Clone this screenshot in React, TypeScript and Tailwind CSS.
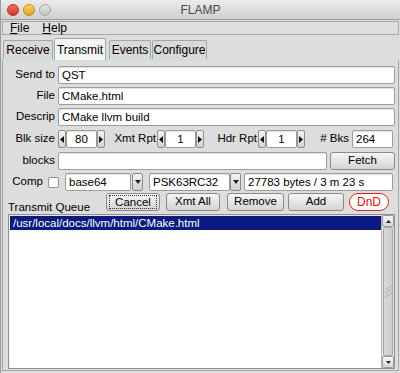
import React from 'react';

const font = { fontFamily: '"Liberation Sans", Arial, sans-serif' };

function Field({ value, className = '' }: { value?: string; className?: string }) {
  return (
    <div
      className={`h-[18px] bg-white border border-[#9d9d9d] rounded-[2px] shadow-[inset_0_1px_1px_rgba(0,0,0,0.12)] px-[3px] leading-[16px] text-black overflow-hidden whitespace-nowrap ${className}`}
    >
      {value}
    </div>
  );
}

function Arrow({ dir }: { dir: 'left' | 'right' }) {
  return (
    <div className="w-[8px] h-[18px] border border-[#8f8f8f] rounded-[2px] bg-gradient-to-b from-[#f4f4f4] to-[#d2d2d2] flex items-center justify-center">
      <svg width="4" height="7" viewBox="0 0 4 7">
        {dir === 'left' ? <path d="M4 0 L0 3.5 L4 7 Z" fill="#111" /> : <path d="M0 0 L4 3.5 L0 7 Z" fill="#111" />}
      </svg>
    </div>
  );
}

function Spinner({ value }: { value: string }) {
  return (
    <div className="flex w-[47px]">
      <Arrow dir="left" />
      <Field value={value} className="w-[31px] text-center" />
      <Arrow dir="right" />
    </div>
  );
}

function Btn({ label, className = '' }: { label: string; className?: string }) {
  return (
    <div
      className={`h-[18px] border border-[#8a8a8a] rounded-[3px] bg-gradient-to-b from-[#f6f6f6] to-[#d4d4d4] flex items-center justify-center text-black ${className}`}
    >
      {label}
    </div>
  );
}

function DropBtn() {
  return (
    <div className="w-[11px] h-[18px] border border-[#8a8a8a] rounded-[2px] bg-gradient-to-b from-[#f4f4f4] to-[#cfcfcf] flex items-center justify-center">
      <svg width="6" height="4" viewBox="0 0 6 4">
        <path d="M0 0 L6 0 L3 4 Z" fill="#222" />
      </svg>
    </div>
  );
}

export default function App() {
  return (
    <div style={font} className="w-[400px] h-[373px] bg-[#dddddd] flex flex-col text-[11.5px] text-black overflow-hidden border-l border-[#9a9a9a]">
      {/* title bar */}
      <div className="h-[20px] bg-gradient-to-b from-[#ebebeb] to-[#d0d0d0] border-b border-[#9c9c9c] flex items-center relative">
        <div className="flex items-center gap-[4px] pl-[6px]">
          <div className="w-[12px] h-[12px] rounded-full bg-gradient-to-b from-[#f26d5f] to-[#d3362a] border border-[#b3362c]" />
          <div className="w-[12px] h-[12px] rounded-full bg-gradient-to-b from-[#fbd36a] to-[#e0a21c] border border-[#c48b17]" />
          <div className="w-[12px] h-[12px] rounded-full bg-gradient-to-b from-[#e6e6e6] to-[#c4c4c4] border border-[#a5a5a5]" />
        </div>
        <div className="absolute inset-0 flex items-center justify-center text-[12px] text-[#4a4a4a]">FLAMP</div>
      </div>

      {/* menu bar */}
      <div className="mx-[1px] mt-[1px] h-[14px] border border-[#a8a8a8] bg-[#dedede] flex items-center gap-[13px] pl-[7px] text-[12px]">
        <span><span className="underline">F</span>ile</span>
        <span><span className="underline">H</span>elp</span>
      </div>

      {/* tabs */}
      <div className="flex items-end h-[24px] pl-[2px] gap-[1px]">
        <div className="h-[19px] w-[50px] border border-b-0 border-[#a6a6a6] rounded-t-[2px] bg-[#d9d9d9] flex items-center justify-center text-[12px]">Receive</div>
        <div className="h-[22px] w-[52px] border border-b-0 border-[#a6a6a6] rounded-t-[2px] bg-[#f3f6f3] flex items-center justify-center text-[12px] -mb-[1px] relative z-10">Transmit</div>
        <div className="h-[19px] w-[42px] ml-[2px] border border-b-0 border-[#a6a6a6] rounded-t-[2px] bg-[#d9d9d9] flex items-center justify-center text-[12px]">Events</div>
        <div className="h-[19px] w-[55px] border border-b-0 border-[#a6a6a6] rounded-t-[2px] bg-[#d9d9d9] flex items-center justify-center text-[12px]">Configure</div>
      </div>

      {/* panel */}
      <div className="mx-[1px] flex-1 border border-[#a6a6a6] border-t-[#cfe0d4] border-t-2 bg-[#dddddd] flex flex-col pt-[5px] pl-[1px] mb-[2px]">
        <div className="flex flex-col gap-[3px]">
          <div className="flex items-center">
            <div className="w-[52px] text-right pr-[1px]">Send to</div>
            <Field value="QST" className="ml-[2px] w-[337px]" />
          </div>
          <div className="flex items-center">
            <div className="w-[52px] text-right pr-[1px]">File</div>
            <Field value="CMake.html" className="ml-[2px] w-[337px]" />
          </div>
          <div className="flex items-center">
            <div className="w-[52px] text-right pr-[1px]">Descrip</div>
            <Field value="CMake llvm build" className="ml-[2px] w-[337px]" />
          </div>
          <div className="flex items-center mt-[1px]">
            <div className="w-[52px] text-right pr-[1px]">Blk size</div>
            <div className="ml-[2px]"><Spinner value="80" /></div>
            <div className="w-[52px] text-right pr-[1px]">Xmt Rpt</div>
            <Spinner value="1" />
            <div className="w-[54px] text-right pr-[1px]">Hdr Rpt</div>
            <Spinner value="1" />
            <div className="w-[45px] text-right pr-[1px]"># Bks</div>
            <Field value="264" className="ml-[2px] w-[41px]" />
          </div>
          <div className="flex items-center mt-[1px]">
            <div className="w-[52px] text-right pr-[1px]">blocks</div>
            <Field className="ml-[2px] w-[269px]" />
            <Btn label="Fetch" className="ml-[3px] w-[65px]" />
          </div>
          <div className="flex items-center">
            <div className="w-[39px] text-right">Comp</div>
            <div className="ml-[5px] w-[11px] h-[11px] bg-white border border-[#8f8f8f] rounded-[2px]" />
            <Field value="base64" className="ml-[6px] w-[66px]" />
            <div className="ml-[1px]"><DropBtn /></div>
            <Field value="PSK63RC32" className="ml-[6px] w-[81px]" />
            <DropBtn />
            <Field value="27783 bytes / 3 m 23 s" className="ml-[3px] w-[149px]" />
          </div>
          <div className="flex items-center -mt-[1px]">
            <div className="w-[102px]" />
            <div className="w-[54px] h-[18px] border border-[#8a8a8a] rounded-[3px] bg-gradient-to-b from-[#f6f6f6] to-[#d4d4d4] flex items-center justify-center">
              <div className="border border-dotted border-[#333] px-[5px] leading-[12px]">Cancel</div>
            </div>
            <Btn label="Xmt All" className="ml-[6px] w-[54px]" />
            <Btn label="Remove" className="ml-[7px] w-[57px]" />
            <Btn label="Add" className="ml-[4px] w-[56px]" />
            <div className="ml-[5px] w-[40px] h-[18px] rounded-full bg-white border border-[#d22] flex items-center justify-center text-[#e01010] text-[12px]">DnD</div>
          </div>
        </div>

        <div className="pl-[4px] -mt-[10px] leading-[13px]">Transmit Queue</div>
        <div className="ml-[4px] w-[387px] h-[155px] border border-[#8f8f8f] bg-white flex shadow-[inset_0_1px_2px_rgba(0,0,0,0.15)]">
          <div className="flex-1 pt-[1px] pl-[1px]">
            <div className="h-[14px] bg-[#0a1a80] text-white leading-[14px] pl-[3px]">/usr/local/docs/llvm/html/CMake.html</div>
          </div>
          <div className="w-[13px] flex flex-col bg-[#e4e4e4] border-l border-[#b8b8b8]">
            <div className="h-[12px] border border-[#9a9a9a] rounded-[2px] bg-gradient-to-b from-[#f6f6f6] to-[#d8d8d8] flex items-center justify-center">
              <svg width="5" height="3" viewBox="0 0 5 3"><path d="M0 3 L5 3 L2.5 0 Z" fill="#222" /></svg>
            </div>
            <div className="flex-1 mx-[1px] border border-[#a9a9a9] rounded-[2px] bg-gradient-to-r from-[#d9d9d9] to-[#cdcdcd] flex items-center justify-center">
              <svg width="9" height="16" viewBox="0 0 9 16">
                <path d="M1 6 L8 1 M1 10 L8 5 M1 14 L8 9" stroke="#9a9a9a" strokeWidth="0.8" />
              </svg>
            </div>
            <div className="h-[12px] border border-[#9a9a9a] rounded-[2px] bg-gradient-to-b from-[#f6f6f6] to-[#d8d8d8] flex items-center justify-center">
              <svg width="5" height="3" viewBox="0 0 5 3"><path d="M0 0 L5 0 L2.5 3 Z" fill="#222" /></svg>
            </div>
          </div>
        </div>
      </div>
    </div>
  );
}
